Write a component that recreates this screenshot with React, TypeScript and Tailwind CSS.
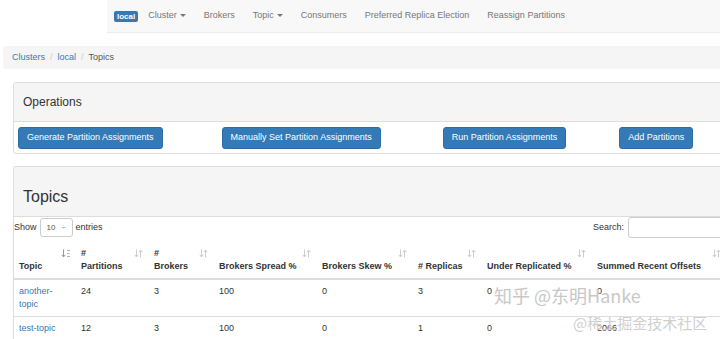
const navItems = [
  { label: "Cluster", caret: true },
  { label: "Brokers" },
  { label: "Topic", caret: true },
  { label: "Consumers" },
  { label: "Preferred Replica Election" },
  { label: "Reassign Partitions" },
];

const columns = [
  { label: ["Topic"], w: "w-[62px]", active: true },
  { label: ["#", "Partitions"], w: "w-[73px]" },
  { label: ["#", "Brokers"], w: "w-[65px]" },
  { label: ["Brokers Spread %"], w: "w-[103px]" },
  { label: ["Brokers Skew %"], w: "w-[96px]" },
  { label: ["# Replicas"], w: "w-[69px]" },
  { label: ["Under Replicated %"], w: "w-[110px]" },
  { label: ["Summed Recent Offsets"], w: "w-[135px]" },
];

const rows = [
  ["another-topic", "24", "3", "100", "0", "3", "0", "0"],
  ["test-topic", "12", "3", "100", "0", "1", "0", "2066"],
];

const Caret = () => (
  <span className="inline-block w-0 h-0 ml-[3px] align-middle border-x-[3px] border-t-[3px] border-x-transparent border-t-[#777]" />
);

// sort arrows in table header
const SortIcon = ({ active }: { active?: boolean }) =>
  active ? (
    <svg width="10" height="9" viewBox="0 0 10 9" className="absolute right-[5px] top-[7px]">
      <path d="M2.5 0.5V7.5M0.8 5.8L2.5 8L4.2 5.8" stroke="#999" strokeWidth="1" fill="none" />
      <path d="M6 1.5H9M6 4.5H8.5M6 7.5H9" stroke="#aaa" strokeWidth="0.9" />
    </svg>
  ) : (
    <svg width="9" height="9" viewBox="0 0 9 9" className="absolute right-[6px] top-[7px]">
      <path d="M2.5 0.5V7.5M0.8 5.8L2.5 8L4.2 5.8" stroke="#ccc" strokeWidth="1" fill="none" />
      <path d="M6.5 8.5V1.5M4.8 3.2L6.5 1L8.2 3.2" stroke="#ccc" strokeWidth="1" fill="none" />
    </svg>
  );

const Btn = ({ children, className }: { children: string; className?: string }) => (
  <button className={"h-[22px] px-[8px] rounded-[3px] bg-[#337ab7] border border-[#2e6da4] text-white text-[9px] whitespace-nowrap " + (className ?? "")}>
    {children}
  </button>
);

export default function App() {
  return (
    <div
      className="relative w-[720px] h-[339px] overflow-hidden bg-white text-[#333] text-[9px]"
      style={{ fontFamily: '"Liberation Sans", Arial, sans-serif' }}
    >
      {/* Navbar */}
      <div className="flex h-[33px]">
        <div className="w-[107px] shrink-0" />
        <div className="flex-1 flex items-center bg-[#f8f8f8] border-b border-[#ececec] pl-[7px]">
          <span className="h-[11px] px-[3px] mr-[1px] rounded-[2px] bg-[#337ab7] text-white text-[8px] font-bold leading-[11px]">local</span>
          {navItems.map((n) => (
            <span key={n.label} className="px-[9px] text-[#777] whitespace-nowrap">
              {n.label}
              {n.caret && <Caret />}
            </span>
          ))}
        </div>
      </div>

      {/* Breadcrumb */}
      <div className="ml-[3px] mt-[13px] h-[23px] w-[740px] flex items-center px-[9px] bg-[#f5f5f5] rounded-[3px]">
        <span className="text-[#337ab7]">Clusters</span>
        <span className="px-[5px] text-[#ccc]">/</span>
        <span className="text-[#337ab7]">local</span>
        <span className="px-[5px] text-[#ccc]">/</span>
        <span className="text-[#555]">Topics</span>
      </div>

      {/* Operations */}
      <div className="ml-[13px] mt-[13px] w-[740px] border border-[#ddd] rounded-[3px]">
        <div className="h-[39px] flex items-center pl-[9px] bg-[#f5f5f5] border-b border-[#ddd] text-[12px] text-[#333]">
          Operations
        </div>
        <div className="flex items-center pt-[5px] pb-[4px] pl-[4px]">
          <Btn>Generate Partition Assignments</Btn>
          <Btn className="ml-[59px]">Manually Set Partition Assignments</Btn>
          <Btn className="ml-[62px]">Run Partition Assignments</Btn>
          <Btn className="ml-[53px]">Add Partitions</Btn>
        </div>
      </div>

      {/* Topics */}
      <div className="ml-[13px] mt-[12px] w-[740px] border-l border-t border-[#ddd] rounded-tl-[3px]">
        <div className="h-[50px] flex items-end pb-[11px] pl-[9px] bg-[#f5f5f5] border-b border-[#ddd] text-[16px] leading-[16px] text-[#333]">
          Topics
        </div>
        <div className="flex items-center h-[21px]">
          <span>Show</span>
          <div className="ml-[3px] w-[33px] h-[19px] border border-[#ccc] rounded-[3px] flex items-center justify-between px-[6px] text-[8px] text-[#555]">
            <span>10</span>
            <span className="text-[7px] leading-[7px] text-[#777]">÷</span>
          </div>
          <span className="ml-[3px]">entries</span>
          <span className="ml-auto mr-[4px]">Search:</span>
          <div className="w-[125px] h-[21px] border border-[#ccc] rounded-[3px]" />
        </div>

        <table className="mt-[4px] table-fixed border-collapse w-[713px] leading-[13px]">
          <thead>
            <tr className="border-b-2 border-[#ddd]">
              {columns.map((c) => (
                <th key={c.label.join()} className={"relative text-left align-bottom font-bold px-[5px] py-[5px] " + c.w}>
                  {c.label.map((l) => (
                    <div key={l}>{l}</div>
                  ))}
                  <SortIcon active={c.active} />
                </th>
              ))}
            </tr>
          </thead>
          <tbody>
            {rows.map((r) => (
              <tr key={r[0]} className="border-b border-[#ddd]">
                {r.map((v, i) => (
                  <td key={i} className={"align-top px-[5px] py-[5px] " + (i === 0 ? "text-[#337ab7]" : "")}>
                    {v}
                  </td>
                ))}
              </tr>
            ))}
          </tbody>
        </table>
      </div>

      {/* watermark */}
      <div className="absolute left-[494px] top-[282px] text-[18px] text-[#c8c8c8] whitespace-nowrap [text-shadow:0_0_2px_white]" style={{ fontFamily: '"Noto Sans CJK SC", sans-serif' }}>
        知乎 @东明Hanke
      </div>
      <div className="absolute left-[573px] top-[312px] text-[15px] text-[#cfcfcf] whitespace-nowrap [text-shadow:0_0_2px_white]" style={{ fontFamily: '"Noto Sans CJK SC", sans-serif' }}>
        @稀土掘金技术社区
      </div>
    </div>
  );
}
